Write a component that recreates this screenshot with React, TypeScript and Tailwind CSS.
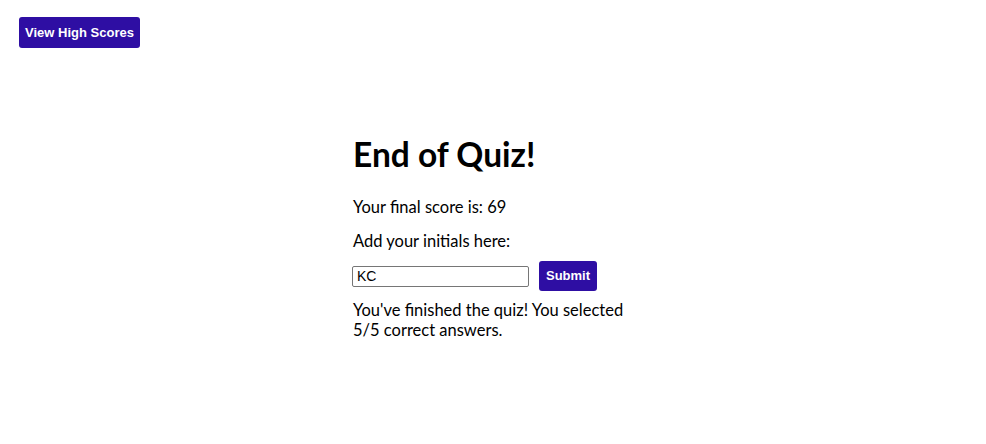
export default function App() {
  return (
    <div className="min-h-screen bg-white text-black" style={{ fontFamily: "Lato, 'Noto Sans', sans-serif" }}>
      {/* Header */}
      <header className="flex pl-[19px] pt-[17px]">
        <button className="h-[31px] w-[121px] whitespace-nowrap rounded-[3px] bg-[#2e0ea3] text-white text-[13px] font-bold font-['Liberation_Sans',Arial,sans-serif]">
          View High Scores
        </button>
      </header>

      {/* End of quiz */}
      <main className="w-[280px] mx-auto mt-[87px]">
        <h1 className="text-[33.5px] font-bold leading-[38px]">End of Quiz!</h1>
        <p className="mt-[24px] text-[16.5px] leading-[20px]">Your final score is: 69</p>
        <p className="mt-[14px] text-[16.5px] leading-[20px]">Add your initials here:</p>
        <div className="mt-[10px] -ml-px flex items-center gap-[10px]">
          <input
            defaultValue="KC"
            className="w-[177px] h-[21px] border border-[#767676] rounded-[2px] px-[4px] text-[14px] font-['Liberation_Sans',Arial,sans-serif]"
          />
          <button className="h-[30px] w-[58px] whitespace-nowrap rounded-[3px] bg-[#2e0ea3] text-white text-[13px] font-bold font-['Liberation_Sans',Arial,sans-serif]">
            Submit
          </button>
        </div>
        <p className="mt-[9px] text-[16.5px] leading-[20px]">
          You've finished the quiz! You selected 5/5 correct answers.
        </p>
      </main>
    </div>
  );
}
